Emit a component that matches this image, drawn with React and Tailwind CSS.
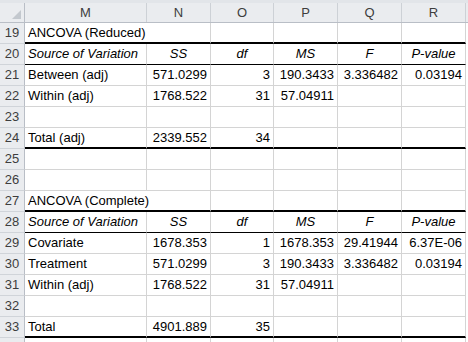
const COLS = [
  { key: 'M', w: 'w-[122px]' },
  { key: 'N', w: 'w-[64px]' },
  { key: 'O', w: 'w-[63px]' },
  { key: 'P', w: 'w-[64px]' },
  { key: 'Q', w: 'w-[64px]' },
  { key: 'R', w: 'w-[64px]' },
];

const HEAD = ['Source of Variation', 'SS', 'df', 'MS', 'F', 'P-value'];

// line: border under the row (thick / thin / none), spill: title text runs over N
const ROWS = [
  { n: 19, cells: ['ANCOVA (Reduced)'], spill: true, line: 'thick' },
  { n: 20, cells: HEAD, head: true, line: 'thin' },
  { n: 21, cells: ['Between (adj)', '571.0299', '3', '190.3433', '3.336482', '0.03194'] },
  { n: 22, cells: ['Within (adj)', '1768.522', '31', '57.04911'] },
  { n: 23, cells: [] },
  { n: 24, cells: ['Total (adj)', '2339.552', '34'], line: 'thick' },
  { n: 25, cells: [] },
  { n: 26, cells: [] },
  { n: 27, cells: ['ANCOVA (Complete)'], spill: true, line: 'thick' },
  { n: 28, cells: HEAD, head: true, line: 'thin' },
  { n: 29, cells: ['Covariate', '1678.353', '1', '1678.353', '29.41944', '6.37E-06'] },
  { n: 30, cells: ['Treatment', '571.0299', '3', '190.3433', '3.336482', '0.03194'] },
  { n: 31, cells: ['Within (adj)', '1768.522', '31', '57.04911'] },
  { n: 32, cells: [] },
  { n: 33, cells: ['Total', '4901.889', '35'], line: 'thick' },
  { n: 34, cells: [], hidden: true },
];

const LINE = {
  thick: 'border-b-2 border-b-black',
  thin: 'border-b border-b-black',
  none: 'border-b border-b-[#d4d4d4]',
};

function Cell({ col, i, row }) {
  const text = row.cells[i] ?? '';
  const line = LINE[row.line || 'none'];
  const noRight = row.spill && i === 0;
  let align = 'justify-end pr-[3px]';
  if (i === 0) align = 'justify-start pl-[3px]';
  if (row.head && i > 0) align = 'justify-center';
  return (
    <div
      className={`${col.w} h-full shrink-0 flex items-center whitespace-nowrap overflow-visible ${line} ${
        noRight ? '' : 'border-r border-r-[#d4d4d4]'
      } ${align} ${row.head ? 'italic' : ''}`}
    >
      <span className="relative z-10">{text}</span>
    </div>
  );
}

export default function App() {
  return (
    <div
      className="w-[468px] h-[342px] overflow-hidden bg-white text-[13px] text-black"
      style={{ fontFamily: '"Liberation Sans", Arial, sans-serif' }}
    >
      <div className="h-[3px] bg-[#e2e5e9]" />
      <div className="flex h-[20px] bg-[#eaecef] border-b border-b-[#b9bec6] text-[#3d3d3d]">
        <div className="w-[25px] shrink-0 border-r border-r-[#b9bec6] relative">
          <svg className="absolute right-[3px] bottom-[3px]" width="9" height="9" viewBox="0 0 9 9">
            <polygon points="9,0 9,9 0,9" fill="#c3c8ce" />
          </svg>
        </div>
        {COLS.map((c) => (
          <div
            key={c.key}
            className={`${c.w} shrink-0 flex items-center justify-center border-r border-r-[#cdd1d6]`}
          >
            {c.key}
          </div>
        ))}
      </div>
      {ROWS.map((row) => (
        <div key={row.n} className="flex h-[21px]">
          <div className="w-[25px] shrink-0 flex items-center justify-center bg-[#eaecef] text-[#3d3d3d] border-r border-r-[#b9bec6] border-b border-b-[#d0d4d9]">
            {row.hidden ? '' : row.n}
          </div>
          {COLS.map((c, i) => (
            <Cell key={c.key} col={c} i={i} row={row} />
          ))}
        </div>
      ))}
    </div>
  );
}
